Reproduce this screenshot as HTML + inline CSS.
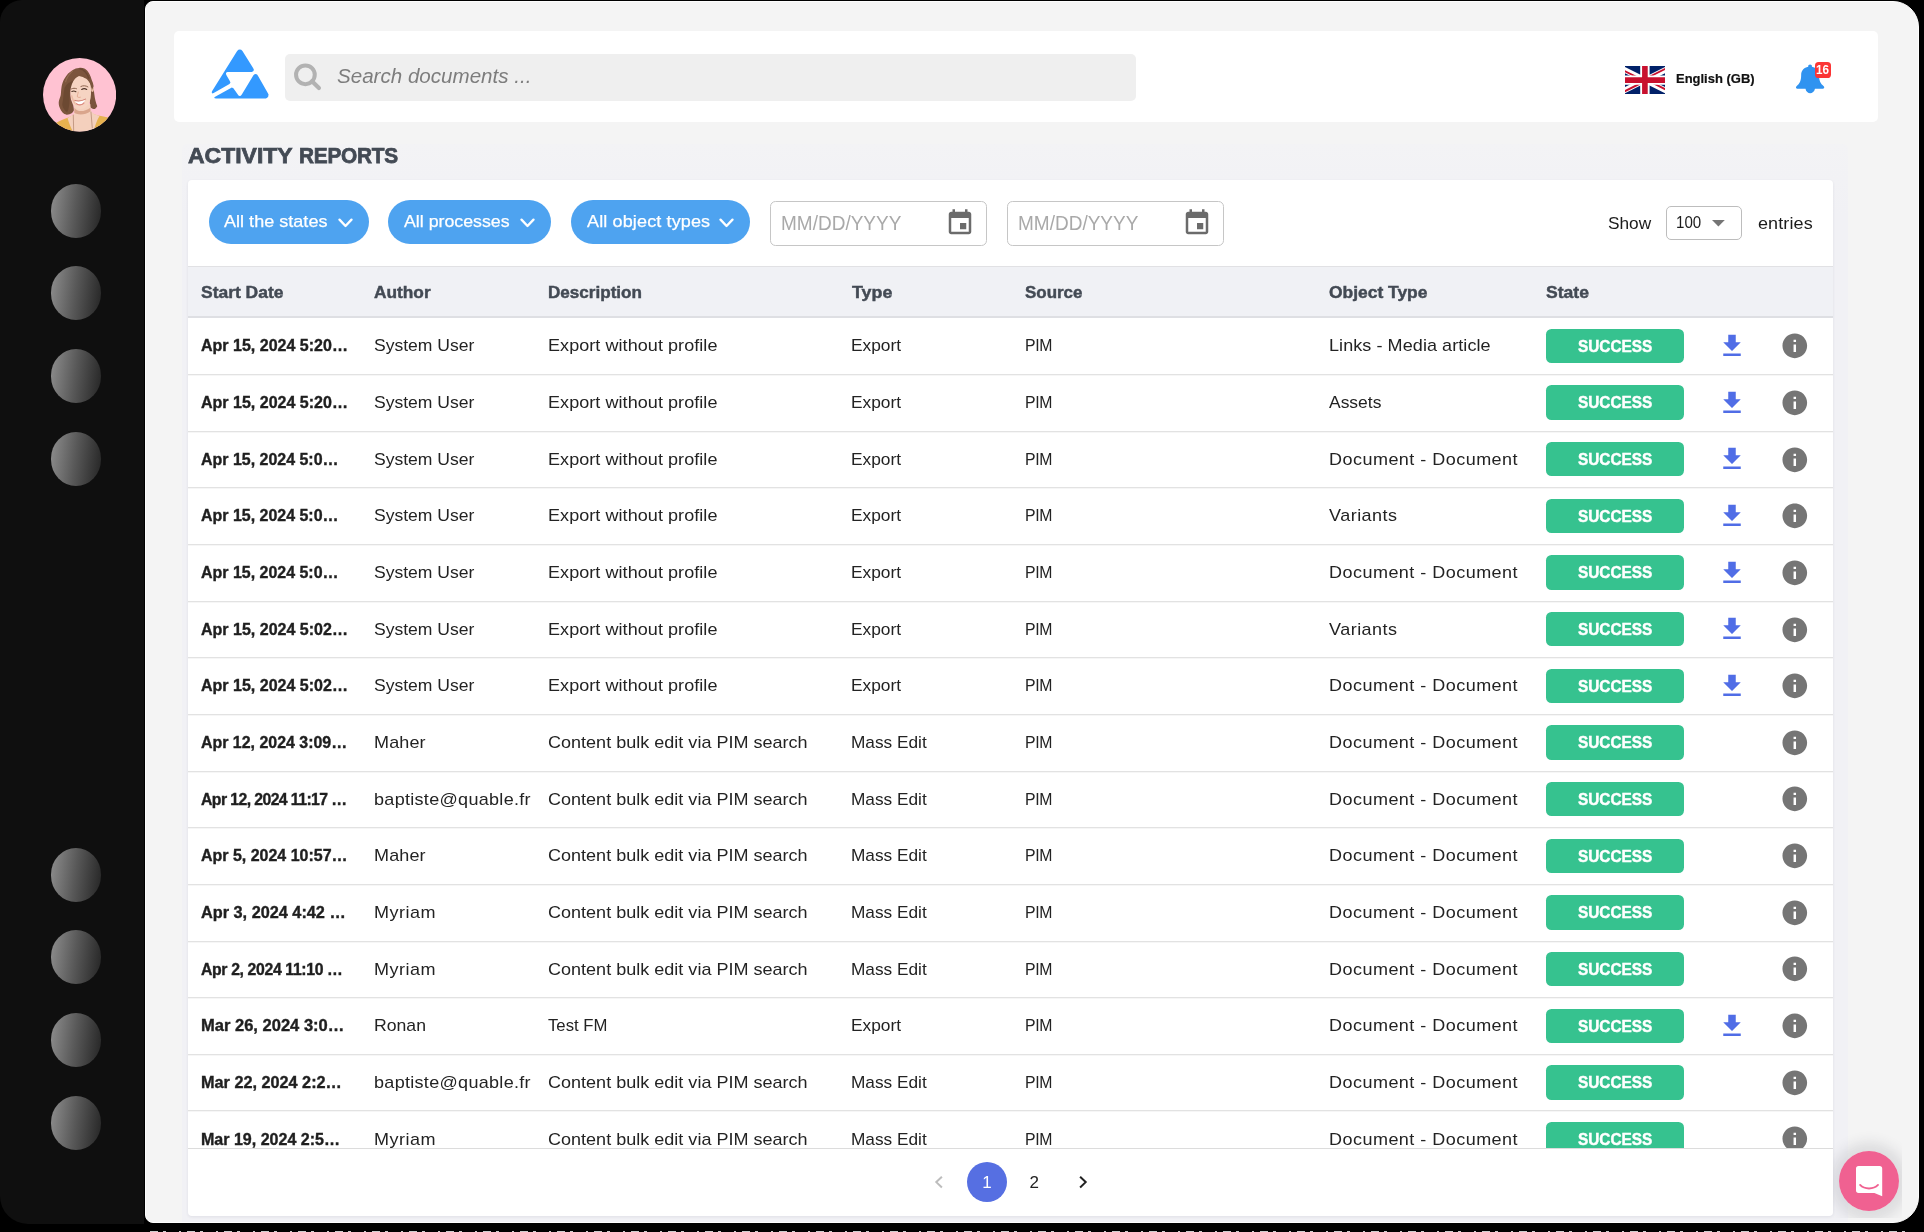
<!DOCTYPE html>
<html lang="en">
<head>
<meta charset="utf-8">
<title>Activity Reports</title>
<style>
*{box-sizing:border-box;margin:0;padding:0}
html,body{width:1924px;height:1232px;overflow:hidden;background:#000}
body{position:relative;font-family:"Liberation Sans",sans-serif}
.abs{position:absolute}
.t{position:absolute;white-space:pre;line-height:1;transform-origin:0 50%;font-family:"Liberation Sans",sans-serif}
#side{position:absolute;left:0;top:0;width:143.8px;height:1223.6px;background:#0f0f0f;border-radius:22px 0 0 28px}
#main{position:absolute;left:144.9px;top:0.9px;width:1774.3px;height:1221.9px;background:#f4f4f4;border:1.1px solid #fdfdfd;border-radius:8px 26px 26px 8px}
#lil{position:absolute;left:182px;top:144.4px;width:1666px;height:1077.4px;border-radius:5px 5px 0 0;background:linear-gradient(#f3f3f5 0,#f1f1f5 70px)}
#hdr{position:absolute;left:174px;top:31px;width:1704px;height:91px;background:#fff;border-radius:5px}
#search{position:absolute;left:285px;top:54.2px;width:850.5px;height:46.4px;background:#efefef;border-radius:5px}
#card{position:absolute;left:188px;top:180.4px;width:1644.8px;height:1035.2px;background:#fff;border-radius:4px;box-shadow:0 1px 3px rgba(60,60,90,.09)}
.pill{position:absolute;top:200.2px;height:44.2px;border-radius:22.1px;background:#4ea3f0}
.chev{position:absolute;top:217.6px;width:15px;height:10px;fill:none;stroke:#fff;stroke-width:2.3;stroke-linecap:round;stroke-linejoin:round}
.date{position:absolute;top:200.5px;width:216.6px;height:45.1px;border:1.4px solid #c6c6c6;border-radius:5.5px;background:#fff}
.cal{position:absolute;top:207.85px;width:30px;height:30px;fill:#6b6b6b}
#sel{position:absolute;left:1666.4px;top:206.2px;width:75.5px;height:33.5px;border:1.2px solid #bdbdbd;border-radius:5px;background:#fff}
#thead{position:absolute;left:188px;top:266.6px;width:1644.8px;height:49.4px;background:#f0f1f5}
.hl{position:absolute;left:188px;width:1644.8px}
.rl{position:absolute;left:188px;width:1644.8px;height:2px;background:linear-gradient(#e2e2e2 0 50%,#f6f6f6 50% 100%)}
.bdg{position:absolute;left:1546px;width:138.1px;height:34.3px;border-radius:5.5px;background:#36c28f}
.dl{position:absolute;left:1717px;width:30px;height:30px;fill:#506de6}
.inf{position:absolute;left:1780.2px;width:29.6px;height:29.6px;fill:#757575}
.gl{position:absolute;left:0;top:0;width:1924px;height:1232px;will-change:transform}
#rows{position:absolute;left:0;top:0;width:1924px;height:1148.6px;overflow:hidden}
</style>
</head>
<body>
<div id="side"></div>
<div id="main"></div>
<div id="lil"></div>

<!-- sidebar -->
<svg class="abs" style="left:42.9px;top:58.4px;width:73.2px;height:73.6px" viewBox="0 0 73 73.4" preserveAspectRatio="none">
<defs><clipPath id="avc"><ellipse cx="36.5" cy="36.7" rx="36.5" ry="36.7"/></clipPath>
<filter id="avb" x="-10%" y="-10%" width="120%" height="120%"><feGaussianBlur stdDeviation="0.6"/></filter>
<filter id="avb2" x="-20%" y="-20%" width="140%" height="140%"><feGaussianBlur stdDeviation="1.1"/></filter></defs>
<g clip-path="url(#avc)"><rect width="73" height="74" fill="#ffc2d2"/>
<g filter="url(#avb)">
<!-- back hair (right side behind neck) -->
<path d="M44 20 C48 22 50.5 28 51.3 36.9 C51.8 41 52.7 44.2 54.1 48.2 C52.8 50.6 51.2 51.2 50.5 50.9 C49 50.6 48 50 47.2 49.2 L46 38 Z" fill="#7a523a"/>
<!-- shoulders / top -->
<path d="M12 65.4 C17 62.6 21 61 24.6 59.7 L31 56.5 L47.5 54.6 C51 56 54 57.2 56.6 57.6 C60 58 63 58.8 66 60 L68 76 L8 76 Z" fill="#e7b250"/>
<!-- chest skin (v-neck) -->
<path d="M31.4 47.5 L31.2 55.5 C28.6 57.4 26 58.6 24.5 59.9 C25.8 65 28 70 30.2 74 L50.4 74 C51.4 68.5 53.6 62.6 56.5 57.7 C52.6 56.8 48.8 55 47.4 52 L47.2 46 Z" fill="#f4d0bd"/>
<path d="M31.4 49.5 C34 53.5 40 54.5 47.3 49.5 L47.4 53 C42 57 35 57 31.2 54.6 Z" fill="#d9a58c"/>
<!-- face -->
<path d="M37.4 17.2 C43.5 17.2 47.6 22.5 47.9 31 C48.1 37.5 47.6 42.5 45.3 46.2 C43.2 49.4 40.3 51.1 37.6 51.1 C34.6 51.1 31.6 49 29.8 45.8 C27.8 42 27 37 27.2 32 C27.6 23 31.5 17.2 37.4 17.2 Z" fill="#f6d4c2"/>
<ellipse cx="49.3" cy="31.2" rx="1.5" ry="2.6" fill="#ecbfa8"/>
<path d="M29 37 C30.5 40.5 31 44 33.5 47.5 C31 46 28.6 42 28 37.5 Z" fill="#eab9a2"/>
<!-- front hair: left mass -->
<path d="M35.9 9.9 C33.5 10 31.5 10.8 30.1 11.7 C27.5 13.2 25.5 15 24.3 16.4 C22.4 18.6 21 21 20.2 23 C19.2 25.4 18.7 27.6 18.4 29.6 C18 32.4 18 35 17.7 36.9 C17.3 39.2 16.3 40.8 15.9 42.7 C15.4 45.2 15.8 47.4 16.6 49.3 C17.3 51.2 18.3 53 19.5 54.4 C20.6 55.6 22 56.3 23.5 56.5 C25.4 56.6 27.2 56 28.6 55.1 C29.6 54.4 30.4 53.4 30.8 52.2 C30.7 50.4 30.5 48.8 30.1 47.1 C29.4 45 28.4 43.2 27.9 41.3 C27.3 39 27.1 36.4 27.2 34 C27.4 31.4 27.8 29 28.6 26.7 C29.4 24.6 30.5 22.6 31.9 20.8 C33 19.5 34.4 18.5 35.9 17.9 C38.6 18.4 41 19.4 43.2 20.8 C45 22.4 46.5 24.4 47.6 26.7 C48.4 28.6 48.6 30.6 48.7 32.5 L50.5 28.1 C50.2 26 49.6 24 48.7 22.3 C48 19.8 47.2 17.6 46.2 15.7 C45 13.4 43.6 11.8 41.8 10.7 C40 9.9 38 9.7 35.9 9.9 Z" fill="#7b543c"/>
<path d="M21.5 30 C20.2 36 20.4 41.5 19.2 46.5 C19.6 49.5 21.4 52.6 24 54 C26.2 50.5 26.4 44.6 26.6 38.6 C26.4 33 27.6 27 30 22.6 C26.4 24 23 26 21.5 30 Z" fill="#63412c" opacity=".6"/>
<path d="M30 12.6 C26.6 15.4 23.6 19.6 22.4 24.2" fill="none" stroke="#9b7357" stroke-width="1.2" opacity=".7"/>
<path d="M36.5 10.6 C40.5 11.4 44 15 45.8 20.5" fill="none" stroke="#60402c" stroke-width="1.4" opacity=".6"/>
<!-- brows / eyes -->
<path d="M28.4 30.8 C30 30 31.8 30 33.4 30.6 M37.8 28.4 C40 27.3 42.6 27.4 44.8 28.8" fill="none" stroke="#80573f" stroke-width="0.9" stroke-linecap="round"/>
<path d="M28.8 33.4 C30 32.8 31.6 32.9 32.8 33.6 M38.6 31.4 C40 30.5 42.2 30.5 43.6 31.4" fill="none" stroke="#4f3528" stroke-width="1.15" stroke-linecap="round"/>
<!-- nose -->
<path d="M35.2 33.6 C34.8 36 34 37.6 34.3 38.8 C35.2 39.4 36.6 39.5 37.6 39" fill="none" stroke="#e0a78f" stroke-width="0.9"/>
<!-- mouth -->
<path d="M32.2 42.6 C34.8 43.6 38.8 43.2 41.8 41.6 C41.2 44.6 39.2 46.2 36.9 46.1 C34.4 46 32.6 44.6 32.2 42.6 Z" fill="#fff"/>
<path d="M31.3 42.2 C34.5 43.3 39 42.9 42.9 40.8" fill="none" stroke="#cf7f74" stroke-width="1"/>
<path d="M33 45.2 C34.8 47.4 39 47.3 41.2 44.4" fill="none" stroke="#dc8c82" stroke-width="1.2"/>
<!-- necklace -->
<path d="M30.2 56.5 L30.6 73 M47.8 53.5 L49.2 70" stroke="#9c6e55" stroke-width="0.55"/>
</g></g></svg>
<div class="abs" style="left:50.6px;top:183.65px;width:50.8px;height:53.9px;border-radius:50%;background:linear-gradient(97deg,#8f8f8f 0%,#595959 48%,#242424 100%)"></div>
<div class="abs" style="left:50.6px;top:266.45px;width:50.8px;height:53.9px;border-radius:50%;background:linear-gradient(97deg,#8f8f8f 0%,#595959 48%,#242424 100%)"></div>
<div class="abs" style="left:50.6px;top:349.25px;width:50.8px;height:53.9px;border-radius:50%;background:linear-gradient(97deg,#8f8f8f 0%,#595959 48%,#242424 100%)"></div>
<div class="abs" style="left:50.6px;top:432.05px;width:50.8px;height:53.9px;border-radius:50%;background:linear-gradient(97deg,#8f8f8f 0%,#595959 48%,#242424 100%)"></div>
<div class="abs" style="left:50.6px;top:847.65px;width:50.8px;height:53.9px;border-radius:50%;background:linear-gradient(97deg,#8f8f8f 0%,#595959 48%,#242424 100%)"></div>
<div class="abs" style="left:50.6px;top:930.45px;width:50.8px;height:53.9px;border-radius:50%;background:linear-gradient(97deg,#8f8f8f 0%,#595959 48%,#242424 100%)"></div>
<div class="abs" style="left:50.6px;top:1013.25px;width:50.8px;height:53.9px;border-radius:50%;background:linear-gradient(97deg,#8f8f8f 0%,#595959 48%,#242424 100%)"></div>
<div class="abs" style="left:50.6px;top:1096.05px;width:50.8px;height:53.9px;border-radius:50%;background:linear-gradient(97deg,#8f8f8f 0%,#595959 48%,#242424 100%)"></div>

<!-- header -->
<div id="hdr"></div>
<svg class="abs" style="left:205px;top:45px;width:70px;height:60px" viewBox="0 0 70 60"><path d="M32.13 6.06 L33.38 4.81 L34.79 4.40 L36.21 4.81 L37.45 6.06 L47.93 22.78 L48.85 24.52 L48.51 25.94 L46.85 27.02 L22.48 27.02 L21.32 27.52 L20.90 28.68 L21.49 30.26 L24.81 36.08 L25.48 37.58 L24.48 39.07 L8.68 48.06 L7.27 48.39 L6.68 47.31 L7.18 45.98 Z M9.26 52.21 L25.48 43.23 L26.89 42.57 L28.39 43.23 L32.80 49.47 L33.79 50.63 L34.79 50.97 L35.79 50.63 L36.79 49.47 L48.43 30.34 L49.51 29.26 L50.76 28.93 L52.09 29.59 L53.09 30.93 L62.65 47.72 L63.57 49.55 L63.07 51.96 L60.99 53.46 L11.09 53.46 L9.68 53.21 Z" fill="#3399ff"/></svg>
<div id="search"></div>
<svg class="abs" style="left:292px;top:62px;width:32px;height:32px" viewBox="0 0 32 32"><circle cx="13.4" cy="12.8" r="9.35" fill="none" stroke="#b2b2b2" stroke-width="4"/><path d="M20 19.2 L26.95 26.05" stroke="#b2b2b2" stroke-width="4.1" stroke-linecap="round"/></svg>
<svg class="abs" style="left:1625px;top:65.8px;width:39.8px;height:28.2px" viewBox="0 0 60 30" preserveAspectRatio="xMidYMid slice">
<defs><clipPath id="fs"><path d="M0,0 v30 h60 v-30 z"/></clipPath><clipPath id="ft"><path d="M30,15 h30 v15 z v15 h-30 z h-30 v-15 z v-15 h30 z"/></clipPath></defs>
<g clip-path="url(#fs)"><path d="M0,0 v30 h60 v-30 z" fill="#012169"/>
<path d="M0,0 L60,30 M60,0 L0,30" stroke="#fff" stroke-width="6"/>
<path d="M0,0 L60,30 M60,0 L0,30" clip-path="url(#ft)" stroke="#C8102E" stroke-width="4"/>
<path d="M30,0 v30 M0,15 h60" stroke="#fff" stroke-width="10"/>
<path d="M30,0 v30 M0,15 h60" stroke="#C8102E" stroke-width="6"/></g></svg>
<svg class="abs" style="left:1790px;top:60px;width:40px;height:38px" viewBox="0 0 40 38"><path fill="#3093f0" d="M18.22 6.86 C17.74 3.73 22.41 3.73 21.96 6.86 C26.26 7.59 29.02 10.83 29.02 15.30 C29.02 20.98 30.73 23.83 33.49 25.94 C34.99 27.28 33.98 28.78 32.56 28.78 L24.96 28.78 C24.44 31.74 22.20 33.25 20.17 33.25 C18.14 33.25 15.91 31.74 15.50 28.78 L7.67 28.78 C6.17 28.78 5.23 27.28 6.77 25.94 C9.54 23.83 11.16 20.98 11.16 15.30 C11.16 10.83 13.92 7.59 18.22 6.86 Z"/></svg>
<div class="abs" style="left:1815.1px;top:62.1px;width:15.9px;height:15.7px;border-radius:3.6px;background:#fb3535"></div>

<!-- card -->
<div id="card"></div>
<div class="pill" style="left:208.6px;width:160.2px"></div>
<div class="pill" style="left:388.3px;width:163.1px"></div>
<div class="pill" style="left:570.8px;width:179.7px"></div>
<svg class="chev" style="left:337.6px" viewBox="0 0 15 10"><path d="M1.5 1.6 L7.5 8 L13.5 1.6"/></svg>
<svg class="chev" style="left:519.8px" viewBox="0 0 15 10"><path d="M1.5 1.6 L7.5 8 L13.5 1.6"/></svg>
<svg class="chev" style="left:719px" viewBox="0 0 15 10"><path d="M1.5 1.6 L7.5 8 L13.5 1.6"/></svg>
<div class="date" style="left:770.4px"></div>
<div class="date" style="left:1007.4px"></div>
<svg class="cal" style="left:944.75px" viewBox="0 0 24 24"><path d="M17 12h-5v5h5v-5zM16 1v2H8V1H6v2H5c-1.11 0-1.99.9-1.99 2L3 19c0 1.1.89 2 2 2h14c1.1 0 2-.9 2-2V5c0-1.1-.9-2-2-2h-1V1h-2zm3 18H5V8h14v11z"/></svg>
<svg class="cal" style="left:1181.6px" viewBox="0 0 24 24"><path d="M17 12h-5v5h5v-5zM16 1v2H8V1H6v2H5c-1.11 0-1.99.9-1.99 2L3 19c0 1.1.89 2 2 2h14c1.1 0 2-.9 2-2V5c0-1.1-.9-2-2-2h-1V1h-2zm3 18H5V8h14v11z"/></svg>
<div id="sel"></div>
<svg class="abs" style="left:1712.3px;top:220.3px;width:12.8px;height:6.6px" viewBox="0 0 12.8 6.6"><path d="M0 0 H12.8 L6.4 6.6 Z" fill="#757575"/></svg>

<div class="hl" style="top:265.6px;height:1.2px;background:#e1e1e4"></div>
<div id="thead"></div>
<div class="hl" style="top:315.9px;height:2.1px;background:#dedfe3"></div>

<div id="rows">
<div class="bdg" style="top:328.82px"></div>
<svg class="dl" style="top:330.97px" viewBox="0 0 24 24"><path d="M19 9h-4V3H9v6H5l7 7 7-7zM5 18v2h14v-2H5z"/></svg>
<svg class="inf" style="top:331.27px" viewBox="0 0 24 24"><path d="M12 2C6.48 2 2 6.48 2 12s4.48 10 10 10 10-4.48 10-10S17.52 2 12 2zm1 15h-2v-6h2v6zm0-8h-2V7h2v2z"/></svg>
<div class="rl" style="top:374px"></div>
<div class="bdg" style="top:385.48px"></div>
<svg class="dl" style="top:387.62px" viewBox="0 0 24 24"><path d="M19 9h-4V3H9v6H5l7 7 7-7zM5 18v2h14v-2H5z"/></svg>
<svg class="inf" style="top:387.93px" viewBox="0 0 24 24"><path d="M12 2C6.48 2 2 6.48 2 12s4.48 10 10 10 10-4.48 10-10S17.52 2 12 2zm1 15h-2v-6h2v6zm0-8h-2V7h2v2z"/></svg>
<div class="rl" style="top:431px"></div>
<div class="bdg" style="top:442.12px"></div>
<svg class="dl" style="top:444.27px" viewBox="0 0 24 24"><path d="M19 9h-4V3H9v6H5l7 7 7-7zM5 18v2h14v-2H5z"/></svg>
<svg class="inf" style="top:444.57px" viewBox="0 0 24 24"><path d="M12 2C6.48 2 2 6.48 2 12s4.48 10 10 10 10-4.48 10-10S17.52 2 12 2zm1 15h-2v-6h2v6zm0-8h-2V7h2v2z"/></svg>
<div class="rl" style="top:487px"></div>
<div class="bdg" style="top:498.77px"></div>
<svg class="dl" style="top:500.92px" viewBox="0 0 24 24"><path d="M19 9h-4V3H9v6H5l7 7 7-7zM5 18v2h14v-2H5z"/></svg>
<svg class="inf" style="top:501.22px" viewBox="0 0 24 24"><path d="M12 2C6.48 2 2 6.48 2 12s4.48 10 10 10 10-4.48 10-10S17.52 2 12 2zm1 15h-2v-6h2v6zm0-8h-2V7h2v2z"/></svg>
<div class="rl" style="top:544px"></div>
<div class="bdg" style="top:555.42px"></div>
<svg class="dl" style="top:557.57px" viewBox="0 0 24 24"><path d="M19 9h-4V3H9v6H5l7 7 7-7zM5 18v2h14v-2H5z"/></svg>
<svg class="inf" style="top:557.87px" viewBox="0 0 24 24"><path d="M12 2C6.48 2 2 6.48 2 12s4.48 10 10 10 10-4.48 10-10S17.52 2 12 2zm1 15h-2v-6h2v6zm0-8h-2V7h2v2z"/></svg>
<div class="rl" style="top:601px"></div>
<div class="bdg" style="top:612.08px"></div>
<svg class="dl" style="top:614.23px" viewBox="0 0 24 24"><path d="M19 9h-4V3H9v6H5l7 7 7-7zM5 18v2h14v-2H5z"/></svg>
<svg class="inf" style="top:614.52px" viewBox="0 0 24 24"><path d="M12 2C6.48 2 2 6.48 2 12s4.48 10 10 10 10-4.48 10-10S17.52 2 12 2zm1 15h-2v-6h2v6zm0-8h-2V7h2v2z"/></svg>
<div class="rl" style="top:657px"></div>
<div class="bdg" style="top:668.72px"></div>
<svg class="dl" style="top:670.87px" viewBox="0 0 24 24"><path d="M19 9h-4V3H9v6H5l7 7 7-7zM5 18v2h14v-2H5z"/></svg>
<svg class="inf" style="top:671.17px" viewBox="0 0 24 24"><path d="M12 2C6.48 2 2 6.48 2 12s4.48 10 10 10 10-4.48 10-10S17.52 2 12 2zm1 15h-2v-6h2v6zm0-8h-2V7h2v2z"/></svg>
<div class="rl" style="top:714px"></div>
<div class="bdg" style="top:725.38px"></div>
<svg class="inf" style="top:727.82px" viewBox="0 0 24 24"><path d="M12 2C6.48 2 2 6.48 2 12s4.48 10 10 10 10-4.48 10-10S17.52 2 12 2zm1 15h-2v-6h2v6zm0-8h-2V7h2v2z"/></svg>
<div class="rl" style="top:771px"></div>
<div class="bdg" style="top:782.02px"></div>
<svg class="inf" style="top:784.47px" viewBox="0 0 24 24"><path d="M12 2C6.48 2 2 6.48 2 12s4.48 10 10 10 10-4.48 10-10S17.52 2 12 2zm1 15h-2v-6h2v6zm0-8h-2V7h2v2z"/></svg>
<div class="rl" style="top:827px"></div>
<div class="bdg" style="top:838.67px"></div>
<svg class="inf" style="top:841.12px" viewBox="0 0 24 24"><path d="M12 2C6.48 2 2 6.48 2 12s4.48 10 10 10 10-4.48 10-10S17.52 2 12 2zm1 15h-2v-6h2v6zm0-8h-2V7h2v2z"/></svg>
<div class="rl" style="top:884px"></div>
<div class="bdg" style="top:895.32px"></div>
<svg class="inf" style="top:897.77px" viewBox="0 0 24 24"><path d="M12 2C6.48 2 2 6.48 2 12s4.48 10 10 10 10-4.48 10-10S17.52 2 12 2zm1 15h-2v-6h2v6zm0-8h-2V7h2v2z"/></svg>
<div class="rl" style="top:941px"></div>
<div class="bdg" style="top:951.98px"></div>
<svg class="inf" style="top:954.42px" viewBox="0 0 24 24"><path d="M12 2C6.48 2 2 6.48 2 12s4.48 10 10 10 10-4.48 10-10S17.52 2 12 2zm1 15h-2v-6h2v6zm0-8h-2V7h2v2z"/></svg>
<div class="rl" style="top:997px"></div>
<div class="bdg" style="top:1008.63px"></div>
<svg class="dl" style="top:1010.78px" viewBox="0 0 24 24"><path d="M19 9h-4V3H9v6H5l7 7 7-7zM5 18v2h14v-2H5z"/></svg>
<svg class="inf" style="top:1011.08px" viewBox="0 0 24 24"><path d="M12 2C6.48 2 2 6.48 2 12s4.48 10 10 10 10-4.48 10-10S17.52 2 12 2zm1 15h-2v-6h2v6zm0-8h-2V7h2v2z"/></svg>
<div class="rl" style="top:1054px"></div>
<div class="bdg" style="top:1065.28px"></div>
<svg class="inf" style="top:1067.73px" viewBox="0 0 24 24"><path d="M12 2C6.48 2 2 6.48 2 12s4.48 10 10 10 10-4.48 10-10S17.52 2 12 2zm1 15h-2v-6h2v6zm0-8h-2V7h2v2z"/></svg>
<div class="rl" style="top:1110px"></div>
<div class="bdg" style="top:1121.92px"></div>
<svg class="inf" style="top:1124.38px" viewBox="0 0 24 24"><path d="M12 2C6.48 2 2 6.48 2 12s4.48 10 10 10 10-4.48 10-10S17.52 2 12 2zm1 15h-2v-6h2v6zm0-8h-2V7h2v2z"/></svg>
<div class="gl">
<span class="t" style="top:337.43px;font-size:17px;color:#1f1f1f;left:200.90px;font-weight:700;transform:scaleX(0.9421);-webkit-text-stroke:0.4px #1f1f1f;">Apr 15, 2024 5:20…</span>
<span class="t" style="top:337.43px;font-size:17px;color:#232323;left:374.00px;transform:scaleX(1.0319);">System User</span>
<span class="t" style="top:337.43px;font-size:17px;color:#232323;left:548.10px;letter-spacing:0.051px;transform:scaleX(1.0600);">Export without profile</span>
<span class="t" style="top:337.43px;font-size:17px;color:#232323;left:851.40px;transform:scaleX(1.0195);">Export</span>
<span class="t" style="top:337.43px;font-size:17px;color:#232323;left:1024.90px;letter-spacing:-0.386px;transform:scaleX(0.9300);">PIM</span>
<span class="t" style="top:337.43px;font-size:17px;color:#232323;left:1329.10px;letter-spacing:0.064px;transform:scaleX(1.0600);">Links - Media article</span>
<span class="t" style="top:337.73px;font-size:16.3px;color:#fff;left:1577.92px;font-weight:700;transform:scaleX(0.9432);-webkit-text-stroke:0.45px #fff;">SUCCESS</span>
<span class="t" style="top:394.08px;font-size:17px;color:#1f1f1f;left:200.90px;font-weight:700;transform:scaleX(0.9421);-webkit-text-stroke:0.4px #1f1f1f;">Apr 15, 2024 5:20…</span>
<span class="t" style="top:394.08px;font-size:17px;color:#232323;left:374.00px;transform:scaleX(1.0319);">System User</span>
<span class="t" style="top:394.08px;font-size:17px;color:#232323;left:548.10px;letter-spacing:0.051px;transform:scaleX(1.0600);">Export without profile</span>
<span class="t" style="top:394.08px;font-size:17px;color:#232323;left:851.40px;transform:scaleX(1.0195);">Export</span>
<span class="t" style="top:394.08px;font-size:17px;color:#232323;left:1024.90px;letter-spacing:-0.386px;transform:scaleX(0.9300);">PIM</span>
<span class="t" style="top:394.08px;font-size:17px;color:#232323;left:1329.10px;transform:scaleX(1.0268);">Assets</span>
<span class="t" style="top:394.38px;font-size:16.3px;color:#fff;left:1577.92px;font-weight:700;transform:scaleX(0.9432);-webkit-text-stroke:0.45px #fff;">SUCCESS</span>
<span class="t" style="top:450.73px;font-size:17px;color:#1f1f1f;left:200.90px;font-weight:700;transform:scaleX(0.9388);-webkit-text-stroke:0.4px #1f1f1f;">Apr 15, 2024 5:0…</span>
<span class="t" style="top:450.73px;font-size:17px;color:#232323;left:374.00px;transform:scaleX(1.0319);">System User</span>
<span class="t" style="top:450.73px;font-size:17px;color:#232323;left:548.10px;letter-spacing:0.051px;transform:scaleX(1.0600);">Export without profile</span>
<span class="t" style="top:450.73px;font-size:17px;color:#232323;left:851.40px;transform:scaleX(1.0195);">Export</span>
<span class="t" style="top:450.73px;font-size:17px;color:#232323;left:1024.90px;letter-spacing:-0.386px;transform:scaleX(0.9300);">PIM</span>
<span class="t" style="top:450.73px;font-size:17px;color:#232323;left:1329.10px;letter-spacing:0.436px;transform:scaleX(1.0600);">Document - Document</span>
<span class="t" style="top:451.03px;font-size:16.3px;color:#fff;left:1577.92px;font-weight:700;transform:scaleX(0.9432);-webkit-text-stroke:0.45px #fff;">SUCCESS</span>
<span class="t" style="top:507.38px;font-size:17px;color:#1f1f1f;left:200.90px;font-weight:700;transform:scaleX(0.9388);-webkit-text-stroke:0.4px #1f1f1f;">Apr 15, 2024 5:0…</span>
<span class="t" style="top:507.38px;font-size:17px;color:#232323;left:374.00px;transform:scaleX(1.0319);">System User</span>
<span class="t" style="top:507.38px;font-size:17px;color:#232323;left:548.10px;letter-spacing:0.051px;transform:scaleX(1.0600);">Export without profile</span>
<span class="t" style="top:507.38px;font-size:17px;color:#232323;left:851.40px;transform:scaleX(1.0195);">Export</span>
<span class="t" style="top:507.38px;font-size:17px;color:#232323;left:1024.90px;letter-spacing:-0.386px;transform:scaleX(0.9300);">PIM</span>
<span class="t" style="top:507.38px;font-size:17px;color:#232323;left:1329.10px;letter-spacing:0.448px;transform:scaleX(1.0600);">Variants</span>
<span class="t" style="top:507.68px;font-size:16.3px;color:#fff;left:1577.92px;font-weight:700;transform:scaleX(0.9432);-webkit-text-stroke:0.45px #fff;">SUCCESS</span>
<span class="t" style="top:564.03px;font-size:17px;color:#1f1f1f;left:200.90px;font-weight:700;transform:scaleX(0.9388);-webkit-text-stroke:0.4px #1f1f1f;">Apr 15, 2024 5:0…</span>
<span class="t" style="top:564.03px;font-size:17px;color:#232323;left:374.00px;transform:scaleX(1.0319);">System User</span>
<span class="t" style="top:564.03px;font-size:17px;color:#232323;left:548.10px;letter-spacing:0.051px;transform:scaleX(1.0600);">Export without profile</span>
<span class="t" style="top:564.03px;font-size:17px;color:#232323;left:851.40px;transform:scaleX(1.0195);">Export</span>
<span class="t" style="top:564.03px;font-size:17px;color:#232323;left:1024.90px;letter-spacing:-0.386px;transform:scaleX(0.9300);">PIM</span>
<span class="t" style="top:564.03px;font-size:17px;color:#232323;left:1329.10px;letter-spacing:0.436px;transform:scaleX(1.0600);">Document - Document</span>
<span class="t" style="top:564.33px;font-size:16.3px;color:#fff;left:1577.92px;font-weight:700;transform:scaleX(0.9432);-webkit-text-stroke:0.45px #fff;">SUCCESS</span>
<span class="t" style="top:620.68px;font-size:17px;color:#1f1f1f;left:200.90px;font-weight:700;transform:scaleX(0.9421);-webkit-text-stroke:0.4px #1f1f1f;">Apr 15, 2024 5:02…</span>
<span class="t" style="top:620.68px;font-size:17px;color:#232323;left:374.00px;transform:scaleX(1.0319);">System User</span>
<span class="t" style="top:620.68px;font-size:17px;color:#232323;left:548.10px;letter-spacing:0.051px;transform:scaleX(1.0600);">Export without profile</span>
<span class="t" style="top:620.68px;font-size:17px;color:#232323;left:851.40px;transform:scaleX(1.0195);">Export</span>
<span class="t" style="top:620.68px;font-size:17px;color:#232323;left:1024.90px;letter-spacing:-0.386px;transform:scaleX(0.9300);">PIM</span>
<span class="t" style="top:620.68px;font-size:17px;color:#232323;left:1329.10px;letter-spacing:0.448px;transform:scaleX(1.0600);">Variants</span>
<span class="t" style="top:620.98px;font-size:16.3px;color:#fff;left:1577.92px;font-weight:700;transform:scaleX(0.9432);-webkit-text-stroke:0.45px #fff;">SUCCESS</span>
<span class="t" style="top:677.33px;font-size:17px;color:#1f1f1f;left:200.90px;font-weight:700;transform:scaleX(0.9421);-webkit-text-stroke:0.4px #1f1f1f;">Apr 15, 2024 5:02…</span>
<span class="t" style="top:677.33px;font-size:17px;color:#232323;left:374.00px;transform:scaleX(1.0319);">System User</span>
<span class="t" style="top:677.33px;font-size:17px;color:#232323;left:548.10px;letter-spacing:0.051px;transform:scaleX(1.0600);">Export without profile</span>
<span class="t" style="top:677.33px;font-size:17px;color:#232323;left:851.40px;transform:scaleX(1.0195);">Export</span>
<span class="t" style="top:677.33px;font-size:17px;color:#232323;left:1024.90px;letter-spacing:-0.386px;transform:scaleX(0.9300);">PIM</span>
<span class="t" style="top:677.33px;font-size:17px;color:#232323;left:1329.10px;letter-spacing:0.436px;transform:scaleX(1.0600);">Document - Document</span>
<span class="t" style="top:677.63px;font-size:16.3px;color:#fff;left:1577.92px;font-weight:700;transform:scaleX(0.9432);-webkit-text-stroke:0.45px #fff;">SUCCESS</span>
<span class="t" style="top:733.98px;font-size:17px;color:#1f1f1f;left:200.90px;font-weight:700;transform:scaleX(0.9370);-webkit-text-stroke:0.4px #1f1f1f;">Apr 12, 2024 3:09…</span>
<span class="t" style="top:733.98px;font-size:17px;color:#232323;left:374.00px;letter-spacing:0.123px;transform:scaleX(1.0600);">Maher</span>
<span class="t" style="top:733.98px;font-size:17px;color:#232323;left:548.10px;letter-spacing:0.006px;transform:scaleX(1.0600);">Content bulk edit via PIM search</span>
<span class="t" style="top:733.98px;font-size:17px;color:#232323;left:851.40px;transform:scaleX(1.0142);">Mass Edit</span>
<span class="t" style="top:733.98px;font-size:17px;color:#232323;left:1024.90px;letter-spacing:-0.386px;transform:scaleX(0.9300);">PIM</span>
<span class="t" style="top:733.98px;font-size:17px;color:#232323;left:1329.10px;letter-spacing:0.436px;transform:scaleX(1.0600);">Document - Document</span>
<span class="t" style="top:734.28px;font-size:16.3px;color:#fff;left:1577.92px;font-weight:700;transform:scaleX(0.9432);-webkit-text-stroke:0.45px #fff;">SUCCESS</span>
<span class="t" style="top:790.63px;font-size:17px;color:#1f1f1f;left:200.90px;font-weight:700;letter-spacing:-0.636px;transform:scaleX(0.9300);-webkit-text-stroke:0.4px #1f1f1f;">Apr 12, 2024 11:17 …</span>
<span class="t" style="top:790.63px;font-size:17px;color:#232323;left:374.00px;letter-spacing:0.280px;transform:scaleX(1.0600);">baptiste@quable.fr</span>
<span class="t" style="top:790.63px;font-size:17px;color:#232323;left:548.10px;letter-spacing:0.006px;transform:scaleX(1.0600);">Content bulk edit via PIM search</span>
<span class="t" style="top:790.63px;font-size:17px;color:#232323;left:851.40px;transform:scaleX(1.0142);">Mass Edit</span>
<span class="t" style="top:790.63px;font-size:17px;color:#232323;left:1024.90px;letter-spacing:-0.386px;transform:scaleX(0.9300);">PIM</span>
<span class="t" style="top:790.63px;font-size:17px;color:#232323;left:1329.10px;letter-spacing:0.436px;transform:scaleX(1.0600);">Document - Document</span>
<span class="t" style="top:790.93px;font-size:16.3px;color:#fff;left:1577.92px;font-weight:700;transform:scaleX(0.9432);-webkit-text-stroke:0.45px #fff;">SUCCESS</span>
<span class="t" style="top:847.28px;font-size:17px;color:#1f1f1f;left:200.90px;font-weight:700;transform:scaleX(0.9396);-webkit-text-stroke:0.4px #1f1f1f;">Apr 5, 2024 10:57…</span>
<span class="t" style="top:847.28px;font-size:17px;color:#232323;left:374.00px;letter-spacing:0.123px;transform:scaleX(1.0600);">Maher</span>
<span class="t" style="top:847.28px;font-size:17px;color:#232323;left:548.10px;letter-spacing:0.006px;transform:scaleX(1.0600);">Content bulk edit via PIM search</span>
<span class="t" style="top:847.28px;font-size:17px;color:#232323;left:851.40px;transform:scaleX(1.0142);">Mass Edit</span>
<span class="t" style="top:847.28px;font-size:17px;color:#232323;left:1024.90px;letter-spacing:-0.386px;transform:scaleX(0.9300);">PIM</span>
<span class="t" style="top:847.28px;font-size:17px;color:#232323;left:1329.10px;letter-spacing:0.436px;transform:scaleX(1.0600);">Document - Document</span>
<span class="t" style="top:847.58px;font-size:16.3px;color:#fff;left:1577.92px;font-weight:700;transform:scaleX(0.9432);-webkit-text-stroke:0.45px #fff;">SUCCESS</span>
<span class="t" style="top:903.93px;font-size:17px;color:#1f1f1f;left:200.90px;font-weight:700;transform:scaleX(0.9570);-webkit-text-stroke:0.4px #1f1f1f;">Apr 3, 2024 4:42 …</span>
<span class="t" style="top:903.93px;font-size:17px;color:#232323;left:374.00px;letter-spacing:0.441px;transform:scaleX(1.0600);">Myriam</span>
<span class="t" style="top:903.93px;font-size:17px;color:#232323;left:548.10px;letter-spacing:0.006px;transform:scaleX(1.0600);">Content bulk edit via PIM search</span>
<span class="t" style="top:903.93px;font-size:17px;color:#232323;left:851.40px;transform:scaleX(1.0142);">Mass Edit</span>
<span class="t" style="top:903.93px;font-size:17px;color:#232323;left:1024.90px;letter-spacing:-0.386px;transform:scaleX(0.9300);">PIM</span>
<span class="t" style="top:903.93px;font-size:17px;color:#232323;left:1329.10px;letter-spacing:0.436px;transform:scaleX(1.0600);">Document - Document</span>
<span class="t" style="top:904.23px;font-size:16.3px;color:#fff;left:1577.92px;font-weight:700;transform:scaleX(0.9432);-webkit-text-stroke:0.45px #fff;">SUCCESS</span>
<span class="t" style="top:960.58px;font-size:17px;color:#1f1f1f;left:200.90px;font-weight:700;letter-spacing:-0.397px;transform:scaleX(0.9300);-webkit-text-stroke:0.4px #1f1f1f;">Apr 2, 2024 11:10 …</span>
<span class="t" style="top:960.58px;font-size:17px;color:#232323;left:374.00px;letter-spacing:0.441px;transform:scaleX(1.0600);">Myriam</span>
<span class="t" style="top:960.58px;font-size:17px;color:#232323;left:548.10px;letter-spacing:0.006px;transform:scaleX(1.0600);">Content bulk edit via PIM search</span>
<span class="t" style="top:960.58px;font-size:17px;color:#232323;left:851.40px;transform:scaleX(1.0142);">Mass Edit</span>
<span class="t" style="top:960.58px;font-size:17px;color:#232323;left:1024.90px;letter-spacing:-0.386px;transform:scaleX(0.9300);">PIM</span>
<span class="t" style="top:960.58px;font-size:17px;color:#232323;left:1329.10px;letter-spacing:0.436px;transform:scaleX(1.0600);">Document - Document</span>
<span class="t" style="top:960.88px;font-size:16.3px;color:#fff;left:1577.92px;font-weight:700;transform:scaleX(0.9432);-webkit-text-stroke:0.45px #fff;">SUCCESS</span>
<span class="t" style="top:1017.23px;font-size:17px;color:#1f1f1f;left:200.90px;font-weight:700;transform:scaleX(0.9720);-webkit-text-stroke:0.4px #1f1f1f;">Mar 26, 2024 3:0…</span>
<span class="t" style="top:1017.23px;font-size:17px;color:#232323;left:374.00px;transform:scaleX(1.0377);">Ronan</span>
<span class="t" style="top:1017.23px;font-size:17px;color:#232323;left:548.10px;transform:scaleX(0.9826);">Test FM</span>
<span class="t" style="top:1017.23px;font-size:17px;color:#232323;left:851.40px;transform:scaleX(1.0195);">Export</span>
<span class="t" style="top:1017.23px;font-size:17px;color:#232323;left:1024.90px;letter-spacing:-0.386px;transform:scaleX(0.9300);">PIM</span>
<span class="t" style="top:1017.23px;font-size:17px;color:#232323;left:1329.10px;letter-spacing:0.436px;transform:scaleX(1.0600);">Document - Document</span>
<span class="t" style="top:1017.53px;font-size:16.3px;color:#fff;left:1577.92px;font-weight:700;transform:scaleX(0.9432);-webkit-text-stroke:0.45px #fff;">SUCCESS</span>
<span class="t" style="top:1073.88px;font-size:17px;color:#1f1f1f;left:200.90px;font-weight:700;transform:scaleX(0.9551);-webkit-text-stroke:0.4px #1f1f1f;">Mar 22, 2024 2:2…</span>
<span class="t" style="top:1073.88px;font-size:17px;color:#232323;left:374.00px;letter-spacing:0.280px;transform:scaleX(1.0600);">baptiste@quable.fr</span>
<span class="t" style="top:1073.88px;font-size:17px;color:#232323;left:548.10px;letter-spacing:0.006px;transform:scaleX(1.0600);">Content bulk edit via PIM search</span>
<span class="t" style="top:1073.88px;font-size:17px;color:#232323;left:851.40px;transform:scaleX(1.0142);">Mass Edit</span>
<span class="t" style="top:1073.88px;font-size:17px;color:#232323;left:1024.90px;letter-spacing:-0.386px;transform:scaleX(0.9300);">PIM</span>
<span class="t" style="top:1073.88px;font-size:17px;color:#232323;left:1329.10px;letter-spacing:0.436px;transform:scaleX(1.0600);">Document - Document</span>
<span class="t" style="top:1074.18px;font-size:16.3px;color:#fff;left:1577.92px;font-weight:700;transform:scaleX(0.9432);-webkit-text-stroke:0.45px #fff;">SUCCESS</span>
<span class="t" style="top:1130.53px;font-size:17px;color:#1f1f1f;left:200.90px;font-weight:700;transform:scaleX(0.9429);-webkit-text-stroke:0.4px #1f1f1f;">Mar 19, 2024 2:5…</span>
<span class="t" style="top:1130.53px;font-size:17px;color:#232323;left:374.00px;letter-spacing:0.441px;transform:scaleX(1.0600);">Myriam</span>
<span class="t" style="top:1130.53px;font-size:17px;color:#232323;left:548.10px;letter-spacing:0.006px;transform:scaleX(1.0600);">Content bulk edit via PIM search</span>
<span class="t" style="top:1130.53px;font-size:17px;color:#232323;left:851.40px;transform:scaleX(1.0142);">Mass Edit</span>
<span class="t" style="top:1130.53px;font-size:17px;color:#232323;left:1024.90px;letter-spacing:-0.386px;transform:scaleX(0.9300);">PIM</span>
<span class="t" style="top:1130.53px;font-size:17px;color:#232323;left:1329.10px;letter-spacing:0.436px;transform:scaleX(1.0600);">Document - Document</span>
<span class="t" style="top:1130.83px;font-size:16.3px;color:#fff;left:1577.92px;font-weight:700;transform:scaleX(0.9432);-webkit-text-stroke:0.45px #fff;">SUCCESS</span>
</div>
</div>
<div class="hl" style="top:1148.2px;height:1.3px;background:#dcdcdc"></div>

<!-- pagination -->
<div class="abs" style="left:966.9px;top:1161.9px;width:40.2px;height:40.2px;border-radius:50%;background:#566fe2"></div>
<svg class="abs" style="left:933px;top:1174px;width:12px;height:16px" viewBox="0 0 12 16"><path d="M8.9 2.7 L3.3 8.1 L8.9 13.5" fill="none" stroke="#bdbdbd" stroke-width="2" stroke-linecap="butt"/></svg>
<svg class="abs" style="left:1076.5px;top:1174px;width:12px;height:16px" viewBox="0 0 12 16"><path d="M3.1 2.7 L8.7 8.1 L3.1 13.5" fill="none" stroke="#222" stroke-width="2" stroke-linecap="butt"/></svg>

<div class="gl">
<span class="t" style="top:65.85px;font-size:20.5px;color:#7d7d7d;left:336.80px;font-style:italic;transform:scaleX(1.0035);">Search documents ...</span>
<span class="t" style="top:72.34px;font-size:13.3px;color:#111;left:1676.30px;font-weight:700;transform:scaleX(0.9762);-webkit-text-stroke:0.2px #111;">English (GB)</span>
<span class="t" style="top:64.17px;font-size:12.5px;color:#fff;left:1816.40px;font-weight:700;transform:scaleX(0.9348);">16</span>
<span class="t" style="top:145.14px;font-size:22.4px;color:#434a54;left:188.38px;font-weight:700;transform:scaleX(1.0258);-webkit-text-stroke:0.75px #434a54;">ACTIVITY</span>
<span class="t" style="top:145.14px;font-size:22.4px;color:#434a54;left:299.47px;font-weight:700;letter-spacing:-0.255px;transform:scaleX(0.9300);-webkit-text-stroke:0.75px #434a54;">REPORTS</span>
<span class="t" style="top:213.41px;font-size:17px;color:#fff;left:224.12px;letter-spacing:0.020px;transform:scaleX(1.0600);-webkit-text-stroke:0.25px #fff;">All the states</span>
<span class="t" style="top:213.41px;font-size:17px;color:#fff;left:404.42px;transform:scaleX(1.0449);-webkit-text-stroke:0.25px #fff;">All processes</span>
<span class="t" style="top:213.41px;font-size:17px;color:#fff;left:586.52px;letter-spacing:0.122px;transform:scaleX(1.0600);-webkit-text-stroke:0.25px #fff;">All object types</span>
<span class="t" style="top:214.01px;font-size:19.6px;color:#a9a9a9;left:780.60px;transform:scaleX(0.9701);">MM/DD/YYYY</span>
<span class="t" style="top:214.01px;font-size:19.6px;color:#a9a9a9;left:1017.60px;transform:scaleX(0.9701);">MM/DD/YYYY</span>
<span class="t" style="top:214.51px;font-size:17px;color:#1c1c1c;left:1607.80px;transform:scaleX(1.0157);">Show</span>
<span class="t" style="top:214.76px;font-size:16px;color:#1c1c1c;left:1676.40px;transform:scaleX(0.9437);">100</span>
<span class="t" style="top:214.51px;font-size:17px;color:#1c1c1c;left:1757.50px;letter-spacing:0.095px;transform:scaleX(1.0600);">entries</span>
<span class="t" style="top:283.51px;font-size:17px;color:#434a54;left:200.82px;font-weight:700;transform:scaleX(1.0266);-webkit-text-stroke:0.45px #434a54;">Start Date</span>
<span class="t" style="top:283.51px;font-size:17px;color:#434a54;left:374.23px;font-weight:700;transform:scaleX(1.0167);-webkit-text-stroke:0.45px #434a54;">Author</span>
<span class="t" style="top:283.51px;font-size:17px;color:#434a54;left:548.33px;font-weight:700;transform:scaleX(1.0045);-webkit-text-stroke:0.45px #434a54;">Description</span>
<span class="t" style="top:283.51px;font-size:17px;color:#434a54;left:851.62px;font-weight:700;transform:scaleX(1.0502);-webkit-text-stroke:0.45px #434a54;">Type</span>
<span class="t" style="top:283.51px;font-size:17px;color:#434a54;left:1025.12px;font-weight:700;transform:scaleX(0.9967);-webkit-text-stroke:0.45px #434a54;">Source</span>
<span class="t" style="top:283.51px;font-size:17px;color:#434a54;left:1329.33px;font-weight:700;transform:scaleX(1.0250);-webkit-text-stroke:0.45px #434a54;">Object Type</span>
<span class="t" style="top:283.51px;font-size:17px;color:#434a54;left:1546.42px;font-weight:700;transform:scaleX(1.0330);-webkit-text-stroke:0.45px #434a54;">State</span>
<span class="t" style="top:1173.61px;font-size:17px;color:#fff;left:936.90px;width:100px;text-align:center;">1</span>
<span class="t" style="top:1173.61px;font-size:17px;color:#222;left:984.30px;width:100px;text-align:center;">2</span>
</div>

<div class="abs" style="left:1833.2px;top:1118px;width:68.8px;height:99.8px;overflow:hidden">
<div class="abs" style="left:5.8px;top:32.9px;width:60.2px;height:60.2px;border-radius:50%;box-shadow:0 1px 14px 9px rgba(40,44,60,.12)"></div></div>
<div class="abs" style="left:1839px;top:1150.9px;width:60.2px;height:60.2px;border-radius:50%;background:#f06191"></div>
<svg class="abs" style="left:1850px;top:1160px;width:40px;height:42px" viewBox="0 0 40 42">
<path d="M8.6 6 H29.6 A2.6 2.6 0 0 1 32.2 8.6 V36.2 L24.4 32.9 H8.6 A2.6 2.6 0 0 1 6 30.3 V8.6 A2.6 2.6 0 0 1 8.6 6 Z" fill="#fff"/>
<path d="M10.1 24.9 C14.5 29.6 23.5 29.6 28 24.9" fill="none" stroke="#f06191" stroke-width="1.9" stroke-linecap="round"/></svg>
<div id="noise" class="abs" style="left:150px;top:1231px;width:1768px;height:1px;opacity:.8;background:repeating-linear-gradient(90deg,#fff 0 8px,#000 8px 13px,#fff 13px 16px,#000 16px 29px,#fff 29px 31px,#000 31px 37px)"></div>
</body>
</html>
